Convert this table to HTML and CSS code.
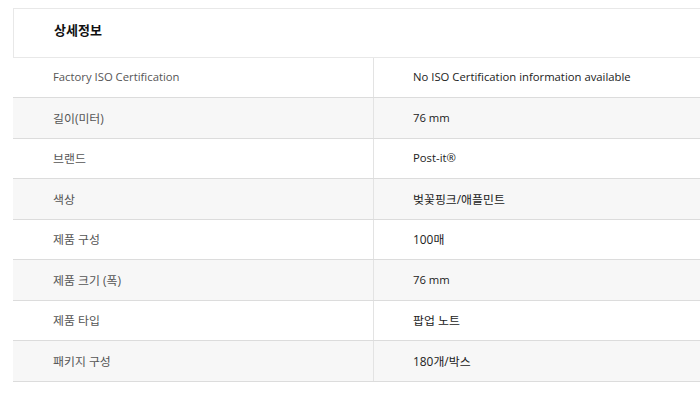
FILE: index.html
```html
<!DOCTYPE html>
<html lang="ko">
<head>
<meta charset="utf-8">
<link rel="stylesheet" href="styles.css">
</head>
<body>
<div class="wrap">
  <div class="head"><h2 class="title">상세정보</h2></div>
  <div class="table">
    <div class="row"><div class="label">Factory ISO Certification</div><div class="value">No ISO Certification information available</div></div>
    <div class="row alt"><div class="label ko">길이(미터)</div><div class="value">76 mm</div></div>
    <div class="row"><div class="label ko">브랜드</div><div class="value">Post-it®</div></div>
    <div class="row alt"><div class="label ko">색상</div><div class="value ko">벚꽃핑크/애플민트</div></div>
    <div class="row"><div class="label ko">제품 구성</div><div class="value ko">100매</div></div>
    <div class="row alt"><div class="label ko">제품 크기 (폭)</div><div class="value">76 mm</div></div>
    <div class="row"><div class="label ko">제품 타입</div><div class="value ko">팝업 노트</div></div>
    <div class="row alt"><div class="label ko">패키지 구성</div><div class="value ko">180개/박스</div></div>
  </div>
</div>
</body>
</html>
```

FILE: styles.css
```css
html, body { margin: 0; padding: 0; background: #fff; }
body { font-family: "Open Sans", "Noto Sans CJK KR", sans-serif; font-size: 11.3px; color: #222; }
.wrap { padding: 8px 0 0 13px; }
.head {
  height: 47.8px;
  box-sizing: content-box;
  border: 1px solid #e8e8e8;
  border-right: none;
  display: flex;
  align-items: center;
  padding: 0 0 0 40px;
}
.title { margin: 0 0 7px 0; font-size: 13px; font-weight: 700; color: #111; }
.row {
  display: grid;
  grid-template-columns: 360px 1fr;
  height: 40.5px;
  box-sizing: border-box;
  border-bottom: 1px solid #dcdcdc;
}
.row.alt { background: #f7f7f7; }
.label, .value { display: flex; align-items: center; padding-left: 40px; padding-bottom: 2px; }
.label { color: #555; }
.value { border-left: 1px solid #e3e3e3; padding-left: 39px; color: #222; }
.ko { font-size: 11.9px; }
```
